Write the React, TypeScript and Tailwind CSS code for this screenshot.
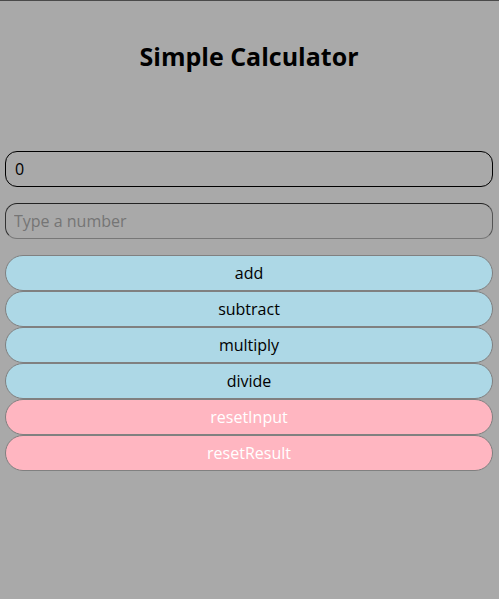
import React from "react";

export default function App() {
  const blue = ["add", "subtract", "multiply", "divide"];
  const pink = ["resetInput", "resetResult"];
  return (
    <div
      className="min-h-[599px] w-full bg-[#a9a9a9] border-t border-[#4a4a4a] pl-[5px] pr-[6px]"
      style={{ fontFamily: '"Open Sans", "Noto Sans", sans-serif' }}
    >
      <h1 className="text-center font-bold text-[25px] leading-[32px] text-black pt-[39px] mb-[79px]">
        Simple Calculator
      </h1>
      <div className="flex flex-col">
        <div className="h-[36px] rounded-[12px] border border-black px-[9px] flex items-center text-[16px] text-black mb-[16px]">
          0
        </div>
        <input
          placeholder="Type a number"
          className="h-[36px] rounded-[12px] border border-t-[#222] border-l-[#333] border-r-[#555] border-b-[#777] px-[8px] text-[16px] bg-transparent outline-none placeholder:text-[#757575] mb-[16px]"
        />
        <div className="flex flex-col">
          {blue.map((b) => (
            <button
              key={b}
              className="h-[36px] rounded-full border border-[#808080] bg-[#add8e6] text-black text-[16px]"
            >
              {b}
            </button>
          ))}
          {pink.map((b) => (
            <button
              key={b}
              className="h-[36px] rounded-full border border-[#808080] bg-[#ffb6c1] text-white text-[16px]"
            >
              {b}
            </button>
          ))}
        </div>
      </div>
    </div>
  );
}
